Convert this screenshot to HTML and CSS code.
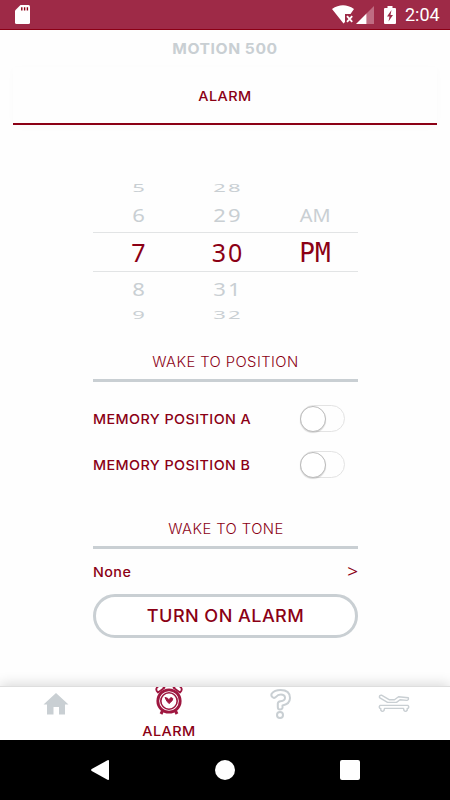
FILE: index.html
```html
<!DOCTYPE html>
<html lang="en">
<head>
  <meta charset="UTF-8" />
  <meta name="viewport" content="width=device-width, initial-scale=1.0" />
  <title>Motion 500 - Alarm</title>
  <link rel="stylesheet" href="styles.css">
</head>
<body>
  <header class="status-bar">
    <svg class="sd-icon" width="15" height="19" viewBox="0 0 15 19"><path fill="#fff" d="M5.5 0H13.5Q15 0 15 1.5V17.5Q15 19 13.5 19H1.5Q0 19 0 17.5V5.5Z"/><path stroke="#8b0015" stroke-width="1.4" d="M6.8 2.2V5.5M9.6 2.2V5.5M12.4 2.2V5.5"/></svg>
    <div class="status-right">
      <svg width="22" height="19" viewBox="0 0 22 19"><path fill="#fff" d="M0 4Q11-3.5 22 4L18.5 9H13V17L11.5 18.5Z"/><path stroke="#fff" stroke-width="1.8" d="M15 11.2L20.2 16.8M20.2 11.2L15 16.8"/></svg>
      <svg class="signal-icon" width="18" height="18" viewBox="0 0 18 18"><path fill="#bf6c82" d="M10.5 7.5L18 0V18H10.5Z"/><path fill="#fff" d="M0 18L10.5 7.5V18Z"/></svg>
      <svg class="battery-icon" width="12" height="18" viewBox="0 0 12 18"><path fill="#fff" d="M3.5 0H8.5V2H11Q12 2 12 3V17Q12 18 11 18H1Q0 18 0 17V3Q0 2 1 2H3.5Z"/><path fill="#9e2a47" d="M7.5 4L3 10.5H5.5L4.5 15.5L9 9H6.5Z"/></svg>
      <span class="clock">2:04</span>
    </div>
  </header>

  <h1 class="title">MOTION 500</h1>
  <div class="tab"><span class="wide">ALARM</span></div>

  <main class="content">
    <div class="picker">
      <div class="row far"><span>5</span><span>28</span><span></span></div>
      <div class="row near"><span>6</span><span>29</span><span class="meridiem">AM</span></div>
      <div class="row selected"><span>7</span><span>30</span><span class="meridiem">PM</span></div>
      <div class="row near below"><span>8</span><span>31</span><span></span></div>
      <div class="row far"><span>9</span><span>32</span><span></span></div>
    </div>

    <h2 class="section position"><span class="wide">WAKE TO POSITION</span></h2>
    <div class="option"><span class="wide">MEMORY POSITION A</span><div class="toggle"><div class="knob"></div></div></div>
    <div class="option"><span class="wide">MEMORY POSITION B</span><div class="toggle"><div class="knob"></div></div></div>

    <h2 class="section tone"><span class="wide">WAKE TO TONE</span></h2>
    <div class="tone-row"><span class="wide">None</span><span class="arrow">&gt;</span></div>
    <button class="alarm-btn"><span class="wide">TURN ON ALARM</span></button>
  </main>

  <nav class="tabs">
    <div class="item home">
      <svg width="26" height="22" viewBox="0 0 26 22"><path fill="#c9cfd3" d="M13 0L25.5 11.5H22V21.5H16V14H10.5V21.5H4V11.5H.5Z"/></svg>
    </div>
    <div class="item active">
      <svg width="28" height="28" viewBox="0 0 28 28" fill="none" stroke="#9e1740">
        <path stroke-width="1.8" stroke-linejoin="round" d="M3 5.5Q0 3 2.2 .2Q6-3 9.5 .8ZM25 5.5Q28 3 25.8 .2Q22-3 18.5 .8Z"/>
        <circle cx="14" cy="14" r="11.2" stroke-width="2.8"/>
        <circle cx="14" cy="14" r="8.2" stroke-width="1.6"/>
        <path stroke-width="3" d="M7.5 24L6 27M20.5 24L22 27"/>
        <path fill="#9e1740" stroke-width="1" stroke-linejoin="round" d="M10 10.5L12.5 11.2L14 12.7L15.8 10.5L17.8 11.5L17.3 13.5L14 16.6L11.8 14Z"/>
      </svg>
      <span class="wide">ALARM</span>
    </div>
    <div class="item help">
      <svg width="22" height="30" viewBox="0 0 22 30" fill="none" stroke="#c9cfd3" stroke-width="2" stroke-linejoin="round">
        <path d="M3 8.5Q.5 7 1.8 4.5Q4.5 1 10.5 1Q20 1 20 9Q20 15 12.5 16.5V19Q12 20.5 10 20.5Q7.8 20.5 7.8 18V14.5Q8 12.5 10.5 12.2Q15 11.8 15 8.8Q15 5.5 10.5 5.6Q8 5.6 6 7.8Q4.5 9.5 3 8.5Z"/>
        <circle cx="10" cy="26" r="3"/>
      </svg>
    </div>
    <div class="item bed">
      <svg width="32" height="20" viewBox="0 0 32 20" fill="none" stroke="#c9cfd3" stroke-width="1.4" stroke-linejoin="round">
        <path d="M3.5 1.2Q1 1 1.5 3.6L9.5 8.4H18.5L22 5.8L29 6.4Q31 6 30.3 3.8L20.5 2.8L16.5 5.8H11.5Z"/>
        <path d="M2 11.4H30Q31.5 13 30 14.4H29.2V16.3Q27.5 18.3 26 16.5L25.5 14.4H6.5L6 16.5Q4.5 18.3 2.8 16.3V14.4H2Q.5 13 2 11.4Z"/>
      </svg>
    </div>
  </nav>

  <footer class="system-nav">
    <svg width="18" height="20" viewBox="0 0 18 20"><path fill="#fff" d="M16.5.3Q18-.5 18 1V19Q18 20.5 16.5 19.7L.7 11Q-.5 10 .7 9Z"/></svg>
    <div class="home-key"></div>
    <div class="recent-key"></div>
  </footer>
</body>
</html>
```
FILE: styles.css
```css
* {
  box-sizing: border-box;
}

body {
  margin: 0;
  width: 450px;
  height: 800px;
  display: flex;
  flex-direction: column;
  background: #fefefe;
  color: #8b0015;
  font-family: Inter, sans-serif;
  overflow: hidden;
}

span, h1, h2, button {
  white-space: nowrap;
}

/* Extended letterforms for the headings and labels */
.wide {
  display: inline-block;
  letter-spacing: .4px;
  transform: scaleX(1.07);
}

/* Android status bar */
.status-bar {
  height: 30px;
  flex: none;
  display: flex;
  justify-content: space-between;
  align-items: center;
  padding: 0 10px 0 15px;
  background: #9e2a47;
  border-bottom: 1px solid #8b0015;
}

.status-right {
  display: flex;
  align-items: center;
}

.signal-icon {
  margin-left: 2px;
}

.battery-icon {
  margin: 0 9px 0 10px;
}

.clock {
  color: #fff;
  font: 400 18px/30px Roboto, sans-serif;
  width: 35px;
  padding-top: 1px;
}

/* Header */
.title {
  height: 37px;
  flex: none;
  margin: 0;
  color: #c9cfd3;
  font-size: 14.5px;
  font-weight: 700;
  line-height: 37px;
  letter-spacing: .5px;
  text-align: center;
  transform: scaleX(1.08);
}

.tab {
  height: 58px;
  flex: none;
  margin: 0 13px;
  border-bottom: 2px solid #8b0015;
  font-size: 13.5px;
  font-weight: 500;
  line-height: 58px;
  text-align: center;
  box-shadow: 0 2px 8px rgba(0, 0, 0, .02);
}

.content {
  width: 265px;
  flex: 1;
  margin-left: 93px;
  padding-top: 52px;
}

/* Time picker wheel */
.picker {
  height: 152px;
  font-family: "Noto Sans", sans-serif;
}

.row {
  display: grid;
  grid-template-columns: 93px 84px 93px;
  align-items: center;
  height: 33px;
  color: #c9cfd3;
  font-size: 21px;
  line-height: 33px;
  letter-spacing: 2px;
  text-align: center;
}

.row span {
  height: 100%;
}

.far {
  height: 22px;
  line-height: 22px;
}

.far span {
  transform: scale(1.05, .5);
}

.near span {
  transform: scale(1.05, .87);
}

.row .meridiem {
  letter-spacing: 0;
  padding-right: 3px;
}

.near .meridiem {
  transform: scale(.95, .87);
}

.below {
  height: 32px;
  line-height: 34px;
}

.selected {
  height: 40px;
  border-top: 1px solid #e2e4e5;
  border-bottom: 1px solid #e2e4e5;
  color: #8b0015;
  font-size: 25px;
  line-height: 38px;
}

.selected .meridiem {
  font-family: "DejaVu Sans Mono", monospace;
  font-size: 26px;
  line-height: 40px;
}

/* Sections */
.section {
  margin: 0;
  height: 37px;
  border-bottom: 3px solid #c9cfd3;
  font-size: 13.8px;
  font-weight: 300;
  line-height: 34px;
  text-align: center;
}

.position {
  margin-top: 16px;
  margin-bottom: 14px;
}

.tone {
  margin-top: 24px;
}

.option {
  height: 46px;
  display: flex;
  justify-content: space-between;
  align-items: center;
  padding-right: 13px;
  font-size: 13.4px;
  font-weight: 550;
}

.option .wide,
.tone-row .wide {
  transform-origin: left;
}

.toggle {
  width: 45px;
  height: 27px;
  margin-top: -1px;
  border: 1px solid #e3e3e3;
  border-radius: 14px;
}

.knob {
  width: 26px;
  height: 26px;
  margin-left: -1px;
  border: 1px solid #bbb;
  border-radius: 50%;
  background: #fff;
  box-shadow: 0 1px 1px rgba(0, 0, 0, .15);
}

.tone-row {
  height: 45px;
  display: flex;
  justify-content: space-between;
  font-size: 13.4px;
  font-weight: 550;
  line-height: 47px;
}

.arrow {
  font: 400 19px/45px "Open Sans", sans-serif;
}

.alarm-btn {
  display: block;
  width: 265px;
  height: 44px;
  border: 3px solid #c9cfd3;
  border-radius: 22px;
  padding: 0;
  background: #fff;
  color: #8b0015;
  font: 550 16.9px/39px Inter, sans-serif;
}

/* Bottom tabs */
.tabs {
  height: 54px;
  flex: none;
  display: grid;
  grid-template-columns: repeat(4, 112.5px);
  background: #fff;
  border-top: 1px solid #dedede;
  box-shadow: 0 -2px 12px rgba(0, 0, 0, .15);
}

.item {
  display: flex;
  flex-direction: column;
  align-items: center;
}

.item svg {
  flex: none;
}

.home {
  padding-top: 6px;
}

.help {
  padding-top: 2px;
}

.bed {
  padding-top: 7px;
}

.active span {
  margin-top: 6px;
  font-size: 13.5px;
  font-weight: 500;
  line-height: 20px;
}

.system-nav {
  height: 60px;
  flex: none;
  display: flex;
  justify-content: space-between;
  align-items: center;
  padding: 0 90px 0 91px;
  background: #000;
}

.home-key,
.recent-key {
  width: 20px;
  height: 20px;
  border-radius: 50%;
  background: #fff;
}

.recent-key {
  border-radius: 2px;
}
```
